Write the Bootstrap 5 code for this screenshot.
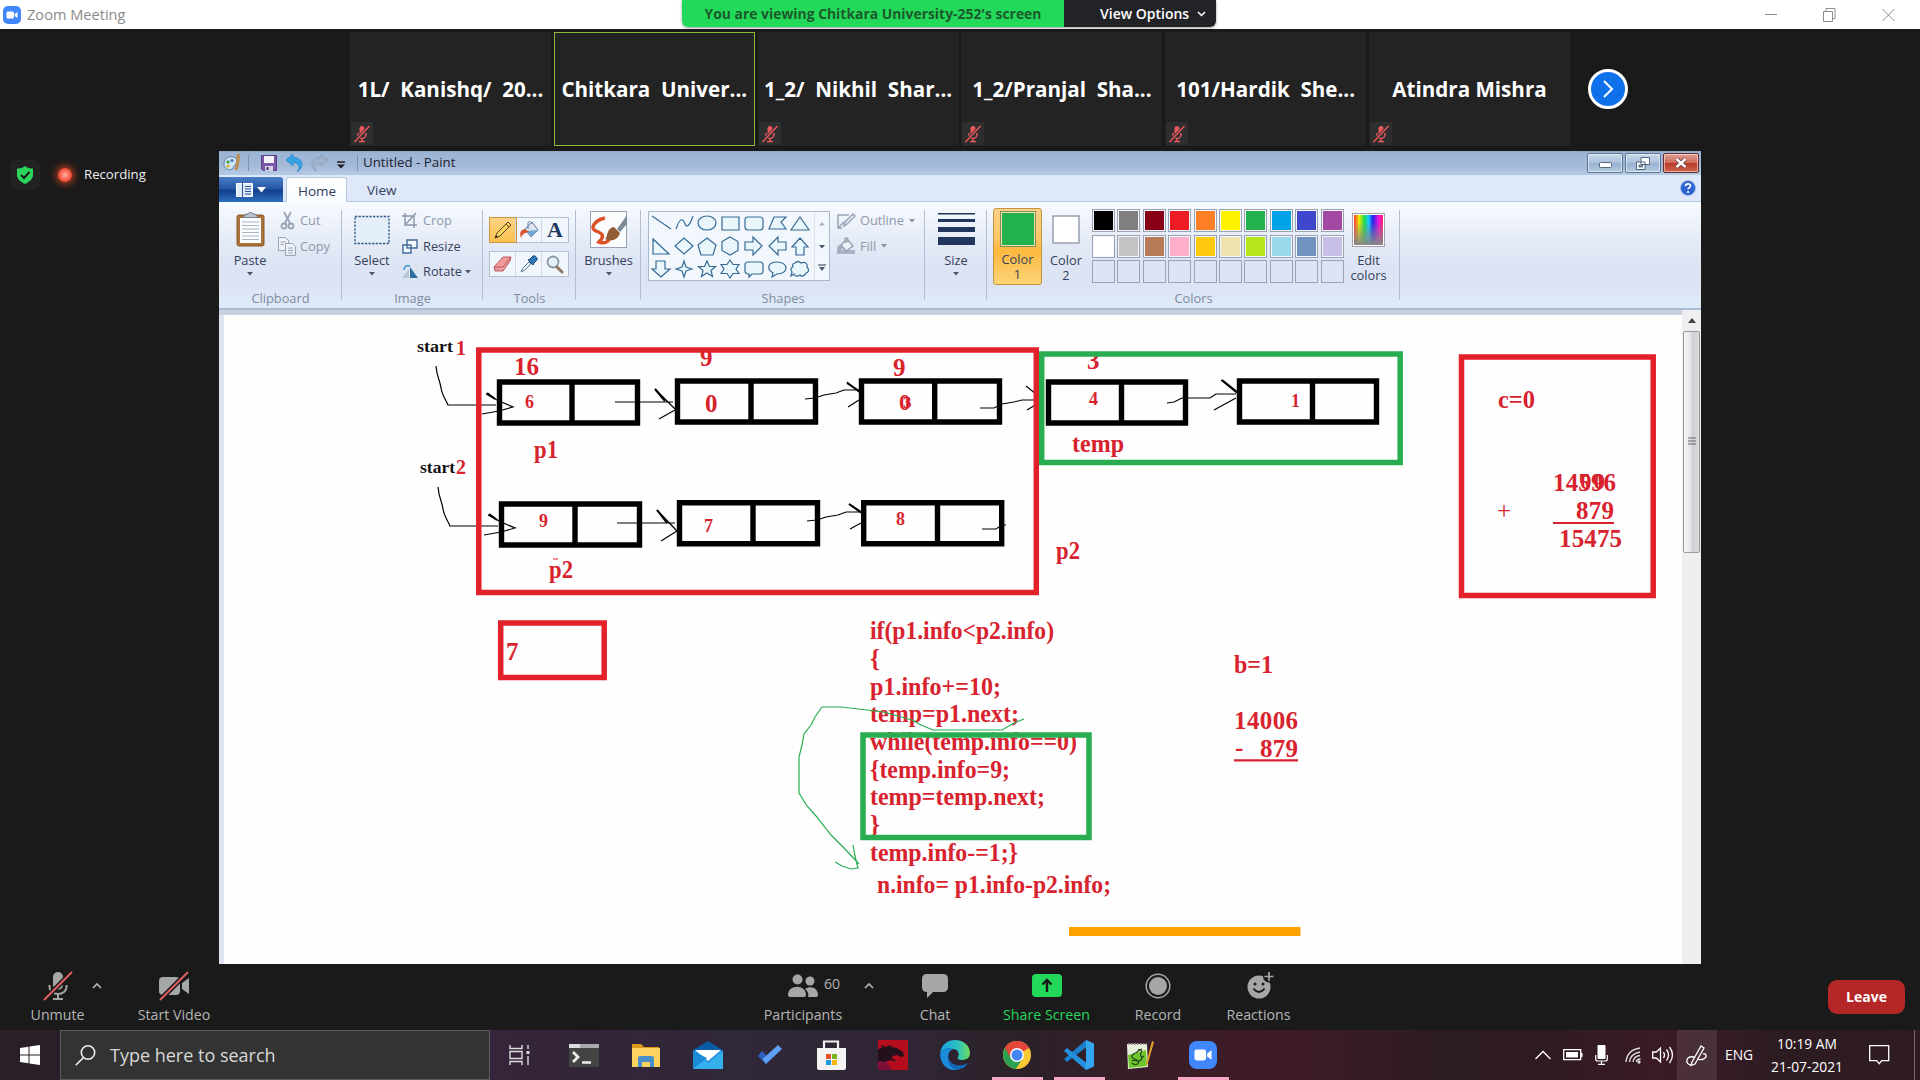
<!DOCTYPE html>
<html lang="en">
<head>
<meta charset="utf-8">
<title>Zoom Meeting</title>
<link rel="stylesheet" href="https://cdn.jsdelivr.net/npm/bootstrap@5.3.0/dist/css/bootstrap.min.css">
<style>
body{width:1920px;height:1080px;overflow:hidden;background:#1a1a1a;font-family:"Open Sans","Noto Sans",sans-serif;font-size:14px;line-height:1}
svg{display:block;flex:none;overflow:visible}
span,div{white-space:nowrap}
.win-title{height:29px;background:#fff;color:#8a8a8a;padding-left:3px}
.win-title .cap{font-size:14.6px;margin-left:6px}
.banner{left:682px;top:0;height:27px;width:534px;border-radius:0 0 6px 6px;overflow:hidden;z-index:3;box-shadow:0 1px 3px #0006;font-weight:700;font-size:13.9px}
.banner .who{width:382px;background:#23d959;color:#1b5a2c}
.banner .opt{background:#222327;color:#fff;font-weight:600;font-size:14px}
.film{height:122px;padding:3px 0 5px 350px;gap:2.800px}
.tile{width:201px;height:114px;background:#232323;color:#fff;font-weight:700;font-size:20.600px;border:1px solid #232323}
.tile.on{border-color:#8db83c}
.tile .mic{left:0;bottom:0;width:22px;height:23px;background:#2e2e2e}
.nextb{width:40px;height:40px;border:3.5px solid #fff;background:#0e71eb;margin-left:15px}
.side{width:219px;padding:9px 0 0 10px;color:#eee;font-size:13.200px}
.shieldbox{width:30px;height:30px;border-radius:6px;background:#222}
.rec{width:14px;height:14px;background:radial-gradient(#ffb0a0,#f4503c 60%);box-shadow:0 0 7px 2px #b8401c;margin:0 12px 0 18px}
.paint{width:1482px;height:813px;background:#dfe3f2;color:#333f5c}
.p-title{height:24px;background:linear-gradient(#8fa6c4 0,#9db6d6 8%,#a3b9d6 60%,#b5cce8);color:#1d2433;font-size:13.300px}
.vsep{width:1px;height:16px;background:#7d93b2}
.wb{width:36px;height:20px;border:1px solid #5f7691;border-radius:2px;background:linear-gradient(#c8d8ea,#adc3dc 48%,#98b2d0 52%,#b4cce4);box-shadow:inset 0 0 0 1px #ffffff80}
.wb.red{background:linear-gradient(#dca195,#cf6a59 48%,#b93a29 52%,#d0664f);border-color:#6b2a2c}
.p-tabs{height:27px;padding-top:2px;background:#dee8f8;font-size:13.5px;border-bottom:1px solid #b7c9de}
.filebtn{width:64px;height:25px;background:linear-gradient(#4a7cc6,#2557a5 48%,#123f8b 52%,#2e6fc0);border-radius:0 3px 0 0}
.tab-on{width:61px;margin-left:3px;height:25px;background:linear-gradient(#fff,#f8fbff);border:1px solid #b7c9de;border-bottom:0;border-radius:3px 3px 0 0;padding:3px 0 0 1px}
.ribbon{height:108px;background:linear-gradient(#f8fbff,#ecf1fa 22%,#dde4f3 55%,#dce3f2 78%,#dfebf9);border-bottom:2px solid #a9bcd4;font-size:12.800px}
.grp{height:98px;position:relative}
.grp::after{content:"";position:absolute;right:0;top:8px;height:90px;width:1px;background:#b3bfd0}
.grp .body{height:88px}
.gcap{height:17px;line-height:17px;color:#7f8ba3;text-align:center}
.rb{padding-top:6px;text-align:center}
.rb .ic{height:43.500px}
.rb .l{line-height:16px}
.rb svg.ar{margin-top:4px}
.dim{color:#8e98aa}
.line3{height:25.5px}
.tools{width:80px;height:26px;border:1px solid #b4bfd0;background:#f1f5fc}
.tools>span{width:27px;border-right:1px solid #d3dae6}
.tools>span:last-child{border-right:0}
.tools>span.hot{background:linear-gradient(#fcd385,#fbc04f);outline:1px solid #c8973d}
.gal{width:182px;height:70px;border:1px solid #aab8cb;background:#f2f7fd}
.c1{width:49px;height:77px;background:linear-gradient(#fbd188,#fbc665 40%,#fdb83f 55%,#fdd477);border:1px solid #c29540;border-radius:3px}
.sw{width:36px;height:36px;border:1px solid #7d8f5e;box-shadow:inset 0 0 0 1px #f7e0a0;background:#22b14c}
.pal{display:grid;grid-template-columns:repeat(10,23px);gap:2.5px 2.4px;grid-auto-rows:23px}
.pal i{border:1px solid #9aa3b3;box-shadow:inset 0 0 0 1px #f4f6fa}
.pal i.no{box-shadow:none}
.p-gap{height:5px;background:#c9d0e0}
.sbar{width:19px;background:#efeff1}
.thumb{margin:0 1px;height:222px;border:1px solid #9a9a9e;border-radius:2px;background:linear-gradient(90deg,#f6f6f6,#e4e4e7 45%,#cfcfd3 55%,#dcdce0)}
.zbar{height:66px;color:#b5b5b5;font-size:14.200px}
.zi{padding-top:5px;text-align:center}
.zi .ic{height:34px;margin-bottom:5px}
.leave{width:77px;height:34px;border-radius:9px;background:#b52627;color:#fff;font-weight:700;font-size:14px;margin:16px 15px 0 0}
.task{height:50px;background:linear-gradient(90deg,#2a1f29 0,#2a1f29 3%,#35243a 26%,#302738 38%,#2f2534 48%,#2b2128 53%,#391d28 60%,#3f1b26 67%,#2c1c20 75%,#2e1b22 80%,#3b1a27 87%,#2c1c22 93%,#301b22);color:#fff}
.find{width:430px;height:50px;background:#333;border:1px solid #5c5c5c;color:#d8d8d8;font-size:18px}
.app{width:61.9px;height:50px;border-bottom:3px solid transparent;padding-top:3px}
.app.run::after{content:"";position:absolute;left:6px;right:5px;bottom:-3px;height:3px;background:#f4a6c6}
.serif{font-family:"Liberation Serif",serif;font-weight:700;fill:#d8232f}
</style>
<script src="https://cdn.jsdelivr.net/npm/bootstrap@5.3.0/dist/js/bootstrap.bundle.min.js"></script>
</head>
<body class="d-flex flex-column position-relative">
<svg width="0" height="0" class="position-absolute">
<defs>
<symbol id="zm" viewBox="0 0 18 18"><rect width="18" height="18" rx="5" fill="#4087fc"/><rect x="3.5" y="5.5" width="7.5" height="7" rx="1.5" fill="#fff"/><path d="M11.7 8 14.5 6v6l-2.800-2z" fill="#fff"/></symbol>
<symbol id="mo" viewBox="0 0 16 18"><rect x="5.500" y="1" width="5" height="9" rx="2.500" fill="#e8585c"/><path d="M4 8v1.500a4 4 0 0 0 8 0V8M8 13.500V16M5 16.500h6" stroke="#e8585c" stroke-width="1.500" fill="none"/><path d="M.5 17 15.500 1" stroke="#2e2e2e" stroke-width="3"/><path d="M.5 17 15.500 1" stroke="#e8585c" stroke-width="1.500"/></symbol>
<symbol id="dn" viewBox="0 0 6 4"><path d="M0 0h6L3 3.500z" fill="#4b566d"/></symbol>
<symbol id="up" viewBox="0 0 10 7"><path d="M1 6l4-4 4 4" fill="none" stroke="#b5b5b5" stroke-width="1.700"/></symbol>
</defs>
</svg>

<header class="win-title d-flex align-items-center">
<svg width="18" height="18"><use href="#zm"/></svg>
<span class="cap">Zoom Meeting</span>
<svg class="ms-auto" width="13" height="14" stroke="#8c8c8c"><path d="M0 6.500h12"/></svg>
<svg width="13" height="14" stroke="#8c8c8c" fill="none" style="margin:0 46px 0 45px"><path d="M.5 3.500h9v10h-9zM3 3.500V.5h9v10H9.500"/></svg>
<svg width="13" height="14" stroke="#8c8c8c" style="margin-right:25px"><path d="M.5 1l12 12M12.500 1l-12 12"/></svg>
</header>
<div class="banner position-absolute d-flex">
<div class="who d-flex align-items-center justify-content-center">You are viewing Chitkara University-252's screen</div>
<div class="opt d-flex align-items-center flex-fill ps-4"><span class="ps-2 ms-1">View Options</span><svg width="9" height="6" class="ms-2"><path d="M1 1l3.500 3.500L8 1" fill="none" stroke="#fff" stroke-width="1.500"/></svg></div>
</div>

<section class="film d-flex">
<div class="tile position-relative d-flex align-items-center justify-content-center"><span>1L/&nbsp; Kanishq/&nbsp; 20...</span><span class="mic position-absolute d-flex align-items-center justify-content-center"><svg width="16" height="18"><use href="#mo"/></svg></span></div>
<div class="tile on d-flex align-items-center justify-content-center"><span>Chitkara&nbsp; Univer...</span></div>
<div class="tile position-relative d-flex align-items-center justify-content-center"><span>1_2/&nbsp; Nikhil&nbsp; Shar...</span><span class="mic position-absolute d-flex align-items-center justify-content-center"><svg width="16" height="18"><use href="#mo"/></svg></span></div>
<div class="tile position-relative d-flex align-items-center justify-content-center"><span>1_2/Pranjal&nbsp; Sha...</span><span class="mic position-absolute d-flex align-items-center justify-content-center"><svg width="16" height="18"><use href="#mo"/></svg></span></div>
<div class="tile position-relative d-flex align-items-center justify-content-center"><span>101/Hardik&nbsp; She...</span><span class="mic position-absolute d-flex align-items-center justify-content-center"><svg width="16" height="18"><use href="#mo"/></svg></span></div>
<div class="tile position-relative d-flex align-items-center justify-content-center"><span>Atindra Mishra</span><span class="mic position-absolute d-flex align-items-center justify-content-center"><svg width="16" height="18"><use href="#mo"/></svg></span></div>
<div class="nextb rounded-circle align-self-center d-flex align-items-center justify-content-center"><svg width="10" height="18"><path d="M1 1l8 8-8 8" fill="none" stroke="#fff" stroke-width="2"/></svg></div>
</section>

<main class="d-flex">
<aside class="side"><div class="d-flex align-items-center">
<div class="shieldbox d-flex align-items-center justify-content-center"><svg width="16" height="18"><path d="M8 0c2 2 5 2.500 8 2.500V9c0 4-3.500 7-8 9-4.500-2-8-5-8-9V2.500C3 2.500 6 2 8 0z" fill="#2bd45c"/><path d="M4 9l3 3 5.500-6" stroke="#1a1a1a" stroke-width="2" fill="none"/></svg></div>
<div class="rec rounded-circle"></div><span>Recording</span></div></aside>

<section class="paint d-flex flex-column">
<div class="p-title d-flex align-items-center ps-1">
<svg width="19" height="18"><path d="M1 10C1 5 5 2 10 3c5 1 4 6 2 8-2 1-1 3-3 4-4 2-8-1-8-5z" fill="#d3e6f3" stroke="#5f83a8"/><circle cx="5" cy="8" r="1.700" fill="#48a04c"/><circle cx="9" cy="6.500" r="1.600" fill="#3d76c9"/><circle cx="5" cy="12" r="1.600" fill="#e0aa30"/><path d="M15 0c1 5 0 9-2 16" stroke="#c08a4c" stroke-width="3" fill="none"/></svg>
<div class="vsep" style="margin:0 12px 0 6px"></div>
<svg width="17" height="17"><path d="M.5.500h15v15H2l-1.500-1.500z" fill="#7a58a6" stroke="#5b3f86"/><path d="M3 1h10v7H3z" fill="#f4f1f8"/><path d="M4 11h8v5H4z" fill="#d8d0e4"/><path d="M5.500 12h2v3h-2z" fill="#463064"/></svg>
<svg width="17" height="18" style="margin-left:8px"><path d="M0 6l7-6v3.500c6 0 9 3 9 7 0 3-2 6-5 7 2-2 2.500-4 1.500-6C11.700 9.500 10 8.500 7 8.500V12z" fill="#35a3e4" stroke="#2484c4" stroke-width=".7"/></svg>
<svg width="17" height="18" style="margin-left:8px"><path d="M17 6l-7-6v3.500C4 3.500 1 6.500 1 10.500c0 3 2 6 5 7-2-2-2.500-4-1.500-6C5.300 9.500 7 8.500 10 8.500V12z" fill="#a0b3cb" stroke="#869dba" stroke-width=".8"/></svg>
<svg width="9" height="8" style="margin-left:9px;margin-top:4px"><path d="M0 1h8" stroke="#222" stroke-width="1.500"/><path d="M0 3.500h8L4 7.500z" fill="#222"/></svg>
<div class="vsep" style="margin:0 5px 0 11px"></div>
<span>Untitled - Paint</span>
<div class="d-flex ms-auto" style="gap:2px;margin-right:2px">
<div class="wb d-flex align-items-center justify-content-center"><svg width="13" height="6" style="margin-top:4px"><rect x=".5" y=".5" width="12" height="5" rx="1" fill="#fff" stroke="#55667c"/></svg></div>
<div class="wb d-flex align-items-center justify-content-center"><svg width="14" height="13" fill="#fff" stroke="#55667c"><path d="M5 .5h8.500v7H5zM.5 5H9v7.500H.5z"/><path d="M3 8h3.500v2H3z" fill="#9ab"/></svg></div>
<div class="wb red d-flex align-items-center justify-content-center"><svg width="12" height="10"><path d="M1.500 1l9 8M10.500 1l-9 8" stroke="#5e3038" stroke-width="4"/><path d="M1.500 1l9 8M10.500 1l-9 8" stroke="#fff" stroke-width="2.600"/></svg></div>
</div></div>
<div class="p-tabs d-flex">
<div class="filebtn d-flex align-items-center justify-content-center"><svg width="17" height="14"><path d="M.5.500h16v13H.5z" fill="#dfeaf8" stroke="#fff"/><path d="M6.500 0v14M9 3.500h6M9 6h6M9 8.500h6M9 11h6" stroke="#27549b"/></svg><svg width="9" height="6" class="ms-1"><path d="M0 0h9L4.500 5.500z" fill="#fff"/></svg></div>
<div class="tab-on d-flex align-items-center justify-content-center">Home</div>
<div class="d-flex align-items-center" style="margin-left:20px;padding-top:3px">View</div>
<svg width="16" height="16" class="ms-auto" style="margin:3px 5px 0 0"><circle cx="8" cy="8" r="7.500" fill="#2f63d0" stroke="#9db9ea"/><path d="M5.500 6.300C5.500 3 10.800 3.200 10.500 6c-.2 1.700-2.400 1.600-2.400 3.300" fill="none" stroke="#fff" stroke-width="1.700"/><circle cx="8.100" cy="12" r="1.100" fill="#fff"/></svg>
</div>

<div class="ribbon d-flex">
<div class="grp" style="width:123px"><div class="body d-flex">
<div class="rb d-flex flex-column align-items-center" style="width:62px"><div class="ic d-flex align-items-center"><svg width="29" height="35"><rect x="1" y="3" width="27" height="31" rx="2" fill="#a9733a" stroke="#87582a"/><path d="M4 6h21v25H4z" fill="#fbfcfd"/><path d="M6 10h17M6 13.500h17M6 17h17M6 20.500h17M6 24h17M6 27.500h17" stroke="#a9b4c2"/><path d="M7 5.500h15L19 2h-2c-.5-2-4.500-2-5 0h-2z" fill="#b9c2cc" stroke="#74808c"/></svg></div><div class="l">Paste</div><svg class="ar" width="6" height="4"><use href="#dn"/></svg></div>
<div class="dim" style="padding:6px 0 0 0">
<div class="line3 d-flex align-items-center"><svg width="14" height="18" fill="none" stroke="#98a4b5" stroke-width="1.800"><path d="M3 0l6 11M10 0L4 11"/><circle cx="3" cy="14" r="2.500"/><circle cx="10" cy="14" r="2.500"/></svg><span style="margin-left:5px">Cut</span></div>
<div class="line3 d-flex align-items-center"><svg width="18" height="19" fill="#eef1f7" stroke="#98a4b5" style="margin-left:-3px"><path d="M.5.500h7l3 3v10H.5z"/><path d="M7.500 6.500h7l3 3v9h-10z"/><path d="M2.500 5h5M2.500 7.500h3M10 11h5M10 13.500h5M10 16h5"/></svg><span style="margin-left:4px">Copy</span></div>
</div></div><div class="gcap">Clipboard</div></div>

<div class="grp" style="width:141px"><div class="body d-flex">
<div class="rb d-flex flex-column align-items-center" style="width:60px"><div class="ic d-flex align-items-center"><svg width="36" height="30"><rect x="1" y="1.500" width="34" height="27" fill="#e3eefa" stroke="#2f5784" stroke-width="1.300" stroke-dasharray="2.300 1.300"/></svg></div><div class="l">Select</div><svg class="ar" width="6" height="4"><use href="#dn"/></svg></div>
<div style="padding-top:6px">
<div class="line3 dim d-flex align-items-center"><svg width="16" height="15" fill="none" stroke="#8997aa" stroke-width="1.400"><path d="M3 0v12h12M0 3h12v12M3 12L14 0"/></svg><span style="margin-left:5px">Crop</span></div>
<div class="line3 d-flex align-items-center"><svg width="16" height="15" stroke="#3f6b9b" fill="#f4f9ff" stroke-width="1.400"><path d="M1 6h8v8H1zM5 1h10v8H5z"/></svg><span style="margin-left:5px">Resize</span></div>
<div class="line3 d-flex align-items-center"><svg width="16" height="15"><path d="M8 14V3l8 11z" fill="#2c6f9f"/><path d="M7 14V5L0 14z" fill="#b8c5d3"/><path d="M2 6c0-4 3-5 6-4" stroke="#3d9bd3" stroke-width="1.600" fill="none"/></svg><span style="margin-left:5px">Rotate</span><svg width="6" height="4" style="margin-left:3px"><use href="#dn"/></svg></div>
</div></div><div class="gcap">Image</div></div>

<div class="grp" style="width:93px"><div class="body d-flex flex-column" style="padding:15px 0 0 6px;gap:8px">
<div class="tools d-flex"><span class="hot d-flex align-items-center justify-content-center"><svg width="18" height="18"><path d="M1 17l2-5L14 1l3 3L6 15z" fill="#f6cf57" stroke="#5c4820"/><path d="M1 17l1-3 2 2z" fill="#222"/><path d="M12 3l3 3" stroke="#5c4820"/></svg></span><span class="d-flex align-items-center justify-content-center"><svg width="20" height="18"><path d="M6 8l7-7 6 8-7 7z" fill="#dde6ee" stroke="#5e7f9c"/><path d="M9 8V2c0-2 4-2 4 1" fill="none" stroke="#5e7f9c"/><path d="M12 16l7-7-11 1z" fill="#6fa5cf"/><path d="M6 8C0 9 1 14 2 17c2-5 4-5 8-6z" fill="#d9532c"/></svg></span><span class="d-flex align-items-center justify-content-center" style="font:700 22px 'Liberation Serif',serif;color:#1f3a60">A</span></div>
<div class="tools d-flex"><span class="d-flex align-items-center justify-content-center"><svg width="20" height="16"><path d="M1 11L10 1h8l-1 4-7 10H2z" fill="#ef9a9c" stroke="#b9585c"/><path d="M1 11h9l8-10" fill="none" stroke="#b9585c"/></svg></span><span class="d-flex align-items-center justify-content-center"><svg width="18" height="18"><path d="M1 17l2-4 6-6 2 2-6 6z" fill="#e6f2fa" stroke="#5f7b93"/><path d="M8 5l5 5 1-2 3-3c1-2-2-5-4-4l-3 3z" fill="#2c76b8" stroke="#1d4f80"/></svg></span><span class="d-flex align-items-center justify-content-center"><svg width="18" height="19"><circle cx="7" cy="7" r="5.500" fill="#e4f0f8" stroke="#8a97a5" stroke-width="1.800"/><path d="M11 12l5 5" stroke="#8c7a62" stroke-width="3" stroke-linecap="round"/></svg></span></div>
</div><div class="gcap">Tools</div></div>

<div class="grp" style="width:65px"><div class="body rb d-flex flex-column align-items-center"><div class="ic d-flex align-items-center"><svg width="37" height="37"><rect x=".5" y=".5" width="36" height="36" fill="#fbfcfe" stroke="#96a3b5"/><path d="M15 7C3 10 0 18 6 20c5 2 10 4 3 11 8 3 11-3 12-6" fill="none" stroke="#dd5126" stroke-width="3.500"/><path d="M37 4L27 18l3 3 7-8z" fill="#7f8d9b"/><path d="M15 28c3-1 1-11 9-12l6 6c-2 7-9 9-15 6z" fill="#935e35"/></svg></div><div class="l">Brushes</div><svg class="ar" width="6" height="4"><use href="#dn"/></svg></div></div>

<div class="grp" style="width:284px"><div class="body d-flex" style="padding:9px 0 0 7px">
<div class="gal d-flex">
<svg width="165" height="68" viewBox="649 212 165 68" fill="#e9f6fb" stroke="#376b96" stroke-width="1.200">
<path d="M652 216l19 13"/><path d="M676 229c5-15 8-8 9-5s4 4 8-8" fill="none"/><ellipse cx="707" cy="223" rx="9" ry="7"/><path d="M722 217h17v13h-17z"/><rect x="745" y="217" width="18" height="13" rx="3"/><path d="M769 229l5-12h12l-5 5 5 7zM800 217l9 13h-18z"/>
<path d="M653 239v15h16zM684 238l9 8-9 8-9-8zM707 238l9 7-3 10h-12l-3-10zM730 237l8 4.500v9L730 255l-8-4.500v-9zM745 242h8v-5l9 9-9 9v-5h-8zM786 242h-8v-5l-9 9 9 9v-5h8zM796 255v-8h-4l8-9 8 9h-4v8z"/>
<path d="M656 261h9v8h5l-9 8-9-8h4zM684 261l2 6 6 2-6 2-2 6-2-6-6-2 6-2zM707 261l2.500 5.500h6l-4.500 4 1.500 6-5.500-3.500-5.500 3.500 1.500-6-4.500-4h6zM730 260l3 4.500h6l-3 4.500 3 4.500h-6l-3 4.500-3-4.500h-6l3-4.500-3-4.500h6z"/><path d="M748 262h12q3 0 3 3v6q0 3-3 3h-8l-3 3v-3q-4 0-4-3v-6q0-3 3-3zM777 262c12 0 12 12 0 12l-5 3 1-4c-7-4-5-11 4-11zM795 263c3-3 5-1 6 0 4-2 7 1 6 4 3 3 1 6-1 6-1 3-4 4-6 2-3 2-6 1-6-1l-3 2 1-4c-2-3-1-5 1-5-1-2 0-4 2-4z"/></svg>
<div class="d-flex flex-column align-items-center flex-fill border-start" style="padding-top:10px;gap:19px"><svg width="6" height="4"><path d="M0 3.500h6L3 0z" fill="#a8b3c3"/></svg><svg width="6" height="4"><use href="#dn"/></svg><svg width="8" height="8" style="margin-top:-4px"><path d="M0 1h8" stroke="#4b566d" stroke-width="1.200"/><path d="M1 3h6L4 7z" fill="#4b566d"/></svg></div>
</div>
<div class="dim" style="margin:-3px 0 0 7px">
<div class="line3 d-flex align-items-center"><svg width="19" height="16" fill="none" stroke="#98a4b5" stroke-width="1.500"><path d="M12 2H1v13h4M1 15L7 9M7 13l1-4 8-8 2 2-8 8z"/></svg><span style="margin-left:4px">Outline</span><svg width="6" height="4" style="margin-left:5px" opacity=".6"><use href="#dn"/></svg></div>
<div class="line3 d-flex align-items-center"><svg width="19" height="18"><path d="M0 13h18v4H0z" fill="#a9b3c2"/><path d="M4 8l6-6 6 7-7 5z" fill="#eef1f6" stroke="#98a4b5" stroke-width="1.500"/><path d="M4 8c-4 0-3 4-3 6l5-3zM8 6V1h3v4" fill="#a9b3c2" stroke="#98a4b5"/></svg><span style="margin-left:4px">Fill</span><svg width="6" height="4" style="margin-left:5px" opacity=".6"><use href="#dn"/></svg></div>
</div></div><div class="gcap">Shapes</div></div>

<div class="grp" style="width:62px"><div class="body rb d-flex flex-column align-items-center"><div class="ic d-flex align-items-center"><svg width="37" height="33" fill="#20365c"><path d="M0 0h37v1.500H0zM0 6h37v3H0zM0 14h37v5H0zM0 24h37v8H0z"/></svg></div><div class="l">Size</div><svg class="ar" width="6" height="4"><use href="#dn"/></svg></div></div>

<div class="grp" style="width:413px"><div class="body d-flex">
<div class="c1 text-center" style="margin:6px 0 0 6px;padding-top:2px"><div class="sw mx-auto"></div><div style="line-height:15px;margin-top:5px">Color</div><div style="line-height:15px">1</div></div>
<div class="rb" style="width:48px"><div class="ic d-flex align-items-center justify-content-center"><svg width="28" height="30"><rect x="1" y="1" width="26" height="27" fill="#fff" stroke="#8b93a3" stroke-width="1.300"/></svg></div><div class="l">Color</div><div style="line-height:15px">2</div></div>
<div class="pal align-self-start" style="margin:7px 0 0 2px">
<i style="background:#000"></i><i style="background:#7f7f7f"></i><i style="background:#880015"></i><i style="background:#ed1c24"></i><i style="background:#ff7f27"></i><i style="background:#fff200"></i><i style="background:#22b14c"></i><i style="background:#00a2e8"></i><i style="background:#3f48cc"></i><i style="background:#a349a4"></i>
<i style="background:#fff"></i><i style="background:#c3c3c3"></i><i style="background:#b97a57"></i><i style="background:#ffaec9"></i><i style="background:#ffc90e"></i><i style="background:#efe4b0"></i><i style="background:#b5e61d"></i><i style="background:#99d9ea"></i><i style="background:#7092be"></i><i style="background:#c8bfe7"></i>
<i class="no"></i><i class="no"></i><i class="no"></i><i class="no"></i><i class="no"></i><i class="no"></i><i class="no"></i><i class="no"></i><i class="no"></i><i class="no"></i></div>
<div class="rb" style="width:50px"><div class="ic d-flex align-items-center justify-content-center"><svg width="33" height="34"><defs><linearGradient id="hue"><stop offset="0" stop-color="#f33"/><stop offset=".18" stop-color="#ee0"/><stop offset=".35" stop-color="#2d4"/><stop offset=".5" stop-color="#1cf"/><stop offset=".65" stop-color="#22e"/><stop offset=".85" stop-color="#e1d"/><stop offset="1" stop-color="#f26"/></linearGradient><linearGradient id="fade" x2="0" y2="1"><stop offset=".2" stop-color="#888" stop-opacity="0"/><stop offset="1" stop-color="#888"/></linearGradient></defs><rect x=".5" y=".5" width="32" height="33" fill="#fff" stroke="#a8a0a8"/><path d="M2 2h29v30H2z" fill="url(#hue)"/><path d="M2 2h29v30H2z" fill="url(#fade)"/></svg></div><div class="l">Edit</div><div style="line-height:15px">colors</div></div>
</div><div class="gcap">Colors</div></div>
</div>

<div class="d-flex flex-fill">
<div class="d-flex flex-column flex-fill"><div class="p-gap"></div>
<div class="d-flex flex-fill">
<svg width="1458" height="649" viewBox="224 315 1458 649" style="margin-left:5px;background:#fefefe;overflow:hidden">
<g fill="none" stroke="#000" stroke-width="1.200">
<path d="M436 366c1 12 4 14 5 22 1 7 5 12 7 17h48M486 394l13 7 14 6-14 4-17 3"/><path d="M487 393l8 6" stroke-width="2"/>
<path d="M615 402h58M655 389l20 20M659 419l16-9"/><path d="M655 389l10 12" stroke-width="2"/>
<path d="M805 399l10-1 9-3 12-2 8-3h15M847 382l12 10" /><path d="M847 383l12 8" stroke-width="2"/><path d="M848 407l11-7"/>
<path d="M980 408h14l8-4 12-2 8-2h20M1026 386l10 8M1027 410l10-6"/>
<path d="M1167 403l7-1 8-4h28l6-4h20M1221 380l16 13M1214 410l22-12"/><path d="M1222 380l15 12" stroke-width="2"/>
<path d="M438 487c1 12 4 14 5 22 1 7 5 12 7 17h48M488 515l13 7 14 6-14 4-17 3"/><path d="M489 514l8 6" stroke-width="2"/>
<path d="M617 523h58M657 510l20 21M661 541l16-10"/><path d="M657 510l10 13" stroke-width="2"/>
<path d="M807 521l10-1 9-3 12-2 8-3h15M849 504l12 9M850 529l11-6"/><path d="M849 504l12 8" stroke-width="2"/>
<path d="M982 529h14l6-4h4"/>
</g>
<g fill="none" stroke="#000" stroke-width="5.400">
<path d="M499.500 382h138v41H499.500zM572 382v40M677.500 381h138v41h-138zM751 381v40M861.500 381h138v41h-138zM934.700 381v40M1048.500 382h137v41h-137zM1121.500 382v40M1239.500 381h137v41h-137zM1312.500 381v40"/>
<path d="M501.500 504h138v41h-138zM575 504v40M679.500 502.700h138v41h-138zM753 503v40M863.700 502.700h138v41h-138zM937.500 503v40"/></g>
<g class="serif" font-size="25">
<g font-size="17.500" style="fill:#111"><text x="417" y="352" textLength="36" lengthAdjust="spacingAndGlyphs">start</text><text x="420" y="473" textLength="35" lengthAdjust="spacingAndGlyphs">start</text></g>
<text x="456" y="355" font-size="20">1</text><text x="456" y="474" font-size="20">2</text>
<text x="514" y="375">16</text><text x="700" y="366">9</text><text x="893" y="376">9</text><text x="1087" y="369">3</text>
<g font-size="18"><text x="525" y="408">6</text><text x="1089" y="405">4</text><text x="1291" y="407">1</text><text x="539" y="527">9</text><text x="704" y="532">7</text><text x="896" y="525">8</text><text x="903" y="408" font-size="17">3</text></g>
<text x="705" y="412">0</text><text x="899" y="410" font-size="23">0</text>
<text x="534" y="458" textLength="24" lengthAdjust="spacingAndGlyphs">p1</text><text x="1072" y="452" textLength="52" lengthAdjust="spacingAndGlyphs">temp</text><text x="549" y="578" textLength="24" lengthAdjust="spacingAndGlyphs">p2</text><path d="M553 559h5" stroke="#d8232f"/><text x="1056" y="559" textLength="24" lengthAdjust="spacingAndGlyphs">p2</text>
<text x="506" y="660">7</text><text x="1498" y="408" textLength="37" lengthAdjust="spacingAndGlyphs">c=0</text>
<text x="1553" y="491" textLength="63">14596</text><text x="1580" y="489" font-size="23" textLength="25">00</text><text x="1497" y="519" style="font-weight:400">+</text><text x="1576" y="519" textLength="38">879</text><text x="1559" y="547" textLength="63">15475</text>
<g lengthAdjust="spacingAndGlyphs"><text x="870" y="639" textLength="184" lengthAdjust="spacingAndGlyphs">if(p1.info&lt;p2.info)</text><text x="870" y="667">{</text><text x="870" y="694.500" textLength="131" lengthAdjust="spacingAndGlyphs">p1.info+=10;</text><text x="870" y="722" textLength="149" lengthAdjust="spacingAndGlyphs">temp=p1.next;</text><text x="870" y="750" textLength="207" lengthAdjust="spacingAndGlyphs">while(temp.info==0)</text><text x="870" y="777.500" textLength="140" lengthAdjust="spacingAndGlyphs">{temp.info=9;</text><text x="870" y="805" textLength="175" lengthAdjust="spacingAndGlyphs">temp=temp.next;</text><text x="870" y="833">}</text><text x="870" y="860.500" textLength="148" lengthAdjust="spacingAndGlyphs">temp.info-=1;}</text><text x="877" y="893" textLength="234" lengthAdjust="spacingAndGlyphs">n.info= p1.info-p2.info;</text></g>
<text x="1234" y="673" textLength="39" lengthAdjust="spacingAndGlyphs">b=1</text><text x="1234" y="729" textLength="64">14006</text><text x="1235" y="756">-</text><text x="1260" y="757" textLength="38">879</text></g>
<path d="M1553 523h61M1234 760.300h64" stroke="#d8232f" stroke-width="2.200"/>
<g fill="none" stroke="#e3212b" stroke-width="5.500"><path d="M478.800 350h557.500v242.500H478.800zM500.700 623h103.500v54.500H500.700zM1461.500 357h191.700v238.500h-191.700z"/></g>
<g fill="none" stroke="#28ad51" stroke-width="5.500"><path d="M1041.700 354h358.500v108.500h-358.500zM863 735h226v102.500H863z"/>
<path stroke-width="1.200" d="M1024 719l-10 4-12 7h-69l-12-5-9-5-14-4-15-4-16-2-26-3h-19l-7 10-4 8-7 9-2 11-3 12v36l8 13 9 10 15 19 13 13 15 16M853 845l2 11 3 12-7 1-9-3-7-4"/></g>
<path d="M1069 927h231.500v9H1069z" fill="#ffa200"/>
</svg></div></div>
<div class="sbar"><svg width="19" height="21"><path d="M6 13h8l-4-5z" fill="#444"/></svg><div class="thumb d-flex align-items-center justify-content-center"><svg width="8" height="10" stroke="#63636a" stroke-width="1.200"><path d="M0 1h8M0 4h8M0 7h8"/></svg></div></div>
</div>
</section>
</main>

<nav class="zbar d-flex">
<div class="zi d-flex flex-column align-items-center" style="width:115px"><div class="ic d-flex align-items-center"><svg width="30" height="30"><rect x="10" y="1" width="10" height="18" rx="5" fill="#a6a6a6"/><path d="M6.500 14v2a8.500 7 0 0 0 17 0v-2M15 23v4M10 28h10" fill="none" stroke="#a6a6a6" stroke-width="2"/><path d="M1 29L29 1" stroke="#1a1a1a" stroke-width="5"/><path d="M1 29L29 1" stroke="#e0605c" stroke-width="2"/></svg></div><div>Unmute</div></div>
<div style="margin:18px 0 0 -23px"><svg width="10" height="7"><use href="#up"/></svg></div>
<div class="zi d-flex flex-column align-items-center" style="width:144px"><div class="ic d-flex align-items-center"><svg width="30" height="30"><rect x="0" y="6" width="21" height="18" rx="4" fill="#a6a6a6"/><path d="M23 12l7-5v16l-7-5z" fill="#a6a6a6"/><path d="M1 29L29 1" stroke="#1a1a1a" stroke-width="5"/><path d="M1 29L29 1" stroke="#e0605c" stroke-width="2"/></svg></div><div>Start Video</div></div>
<div class="zi d-flex flex-column align-items-center position-relative" style="width:120px;margin-left:497px"><div class="ic d-flex align-items-center"><svg width="30" height="24" fill="#a6a6a6"><circle cx="9.500" cy="5.500" r="5"/><circle cx="22" cy="7" r="4.500"/><path d="M0 21c0-11 18-11 18 0 0 1-1 2-2 2H2c-1 0-2-1-2-2zM20 23c1-3 0-6-3-8 6-4 13-1 13 6 0 1-1 2-2 2z"/></svg></div><div>Participants</div><span class="position-absolute" style="left:81px;top:13px">60</span></div>
<div style="margin:18px 0 0 1px"><svg width="10" height="7"><use href="#up"/></svg></div>
<div class="zi d-flex flex-column align-items-center" style="width:122px"><div class="ic d-flex align-items-center"><svg width="26" height="24" fill="#a6a6a6"><path d="M5 0h16q5 0 5 5v8q0 5-5 5H11l-6 6v-6q-5 0-5-5V5q0-5 5-5z"/></svg></div><div>Chat</div></div>
<div class="zi d-flex flex-column align-items-center" style="width:101px;color:#23d959"><div class="ic d-flex align-items-center"><svg width="30" height="24"><rect y="0" width="30" height="23" rx="4" fill="#23d959"/><path d="M15 18V6M10.500 10.500L15 6l4.500 4.500" fill="none" stroke="#1a1a1a" stroke-width="2.400"/></svg></div><div>Share Screen</div></div>
<div class="zi d-flex flex-column align-items-center" style="width:122px"><div class="ic d-flex align-items-center"><svg width="26" height="26"><circle cx="13" cy="13" r="11.800" fill="none" stroke="#a6a6a6" stroke-width="1.500"/><circle cx="13" cy="13" r="9" fill="#a6a6a6"/></svg></div><div>Record</div></div>
<div class="zi d-flex flex-column align-items-center" style="width:79px"><div class="ic d-flex align-items-center"><svg width="24" height="28"><circle cx="12" cy="15" r="11.500" fill="#a6a6a6"/><circle cx="22" cy="4.500" r="6" fill="#1a1a1a"/><path d="M22 0v9M17.500 4.500h9" stroke="#a6a6a6" stroke-width="1.700"/><circle cx="8" cy="12" r="1.500" fill="#1a1a1a"/><circle cx="16" cy="12" r="1.500" fill="#1a1a1a"/><path d="M6.500 16.500q5.500 7 11 0" stroke="#1a1a1a" stroke-width="1.800" fill="none"/></svg></div><div>Reactions</div></div>
<div class="leave ms-auto d-flex align-items-center justify-content-center">Leave</div>
</nav>

<footer class="task d-flex">
<div class="d-flex align-items-center justify-content-center" style="width:60px"><svg width="20" height="20" fill="#fff"><path d="M0 3l8.500-1.300v7.800H0zM9.500 1.500L20 0v9.500H9.500zM0 10.500h8.500v7.800L0 17zM9.500 10.500H20V20L9.500 18.500z"/></svg></div>
<div class="find d-flex align-items-center"><svg width="21" height="21" style="margin:0 14px" fill="none" stroke="#eee" stroke-width="1.600"><circle cx="13" cy="7.500" r="6.700"/><path d="M8.500 12.500L.7 20.300"/></svg><span>Type here to search</span></div>
<div class="app d-flex align-items-center justify-content-center" style="width:60px"><svg width="22" height="20" fill="none" stroke="#ddd" stroke-width="1.400"><path d="M1 0v3.500h12V0M1 20v-3.500h12V20M1 6.500h12v7H1zM19 0v4M19 11v9"/><path d="M17.500 6h3v3h-3z" fill="#ddd" stroke="none"/></svg></div>
<div class="app d-flex align-items-center justify-content-center" style="margin-left:3px"><svg width="30" height="23"><rect width="30" height="23" rx="1.500" fill="#444"/><path d="M0 0h30v4H0z" fill="#aaa"/><path d="M0 0h11v4H0z" fill="#ddd"/><path d="M4 8l5 5-5 5" fill="none" stroke="#eee" stroke-width="2.800"/><path d="M13 18.500h9" stroke="#eee" stroke-width="2.500"/></svg></div>
<div class="app d-flex align-items-center justify-content-center"><svg width="28" height="24"><path d="M0 1h9l3 3h15v7H0z" fill="#d99a1b"/><path d="M0 5h28v19H0z" fill="#fbd35e"/><path d="M6 24v-9q0-2 2-2h12q2 0 2 2v9h-4v-5h-8v5z" fill="#4990c9"/></svg></div>
<div class="app d-flex align-items-center justify-content-center"><svg width="30" height="28"><path d="M0 9L15 0l15 9v5H0z" fill="#0a5aa6"/><path d="M0 10h30v18H0z" fill="#2492df"/><path d="M2 9h26L15 20z" fill="#fff"/><path d="M0 10l15 12L30 10v18H0z" fill="#35b0ec"/><path d="M0 28l14-11L0 10z" fill="#1b8bd8"/></svg></div>
<div class="app d-flex align-items-center justify-content-center"><svg width="24" height="20"><path d="M0 11l4-5 8 8-4 5z" fill="#2962c0"/><path d="M8 19L4.500 14 20 0l4 4z" fill="#5ea0f5"/></svg></div>
<div class="app d-flex align-items-center justify-content-center"><svg width="29" height="30"><path d="M7 8V1.500h14V8" fill="none" stroke="#eee" stroke-width="2.200"/><path d="M0 8h29v20q0 2-2 2H2q-2 0-2-2z" fill="#f3f3f3"/><path d="M9 14h5v5H9z" fill="#e5502b"/><path d="M15 14h5v5h-5z" fill="#79b51c"/><path d="M9 20h5v5H9z" fill="#1c9be0"/><path d="M15 20h5v5h-5z" fill="#f7b70a"/></svg></div>
<div class="app d-flex align-items-center justify-content-center"><svg width="30" height="30"><path d="M0 0h30v30H0z" fill="#b50d1d"/><path d="M0 9l4-1-1-3 5 2 4-2 2 2 5 1 6 4 1 4-3 1-4-2-4 1-2 2 3 1 2 3-5-2-4 1-3 2H0z" fill="#240f1c"/><path d="M0 21l9 1 5 8H0z" fill="#7d1038"/></svg></div>
<div class="app d-flex align-items-center justify-content-center"><svg width="30" height="30"><defs><linearGradient id="eg"><stop offset="0" stop-color="#1a9fe0"/><stop offset=".6" stop-color="#2cc3c0"/><stop offset="1" stop-color="#6fdc58"/></linearGradient></defs><path d="M0 14C1 5 7 0 15 0c9 0 15 6 15 13 0 5-4 7-8 7-3 0-5-1-4-3 2-3 0-8-5-8-6 0-10 3-13 5z" fill="url(#eg)"/><path d="M0 14c2-4 8-7 13-5-5 2-6 7-3 12 3 5 11 6 18 2-3 5-8 7-13 7C6 30 0 23 0 14z" fill="#1269b8"/><path d="M13 9c-8 3-7 17 3 21C7 31-1 22 1 13c3-4 8-5 12-4z" fill="#1f8bdc"/></svg></div>
<div class="app run position-relative d-flex align-items-center justify-content-center"><svg width="28" height="28"><circle cx="14" cy="14" r="14" fill="#fbc934"/><path d="M14 14L1.900 7A14 14 0 0 1 26.100 7z" fill="#e2463a"/><path d="M14 14L1.900 7a14 14 0 0 0 11 21L20 17z" fill="#2aa252"/><path d="M14 7h12.100A14 14 0 0 0 2 7l6 10.500z" fill="#e2463a"/><circle cx="14" cy="14" r="7" fill="#fff"/><circle cx="14" cy="14" r="5.500" fill="#4384f3"/></svg></div>
<div class="app run position-relative d-flex align-items-center justify-content-center"><svg width="30" height="30"><path d="M22 0l8 3.500v23L22 30z" fill="#35a7f0"/><path d="M22 7.500L3 22l-3-3L22 0z" fill="#1b7fc9"/><path d="M22 22.500L3 8 0 11l22 19z" fill="#2590dd"/></svg></div>
<div class="app d-flex align-items-center justify-content-center"><svg width="30" height="28"><path d="M1 3h20l1 23-20 2z" fill="#e8f0dc"/><path d="M2 14l18-5 1 16-18 2z" fill="#6fc62c"/><path d="M6 22c3 3 8 1 6-2s-7-1-6-5 5-2 6-5 5-1 3 2 3 4 0 7-6-1-9 1M12 10l4-2M15 17l3-2" fill="none" stroke="#24451a" stroke-width="1.200"/><path d="M2 3h19" stroke="#999" stroke-width="2" stroke-dasharray="1.500 1.500"/><path d="M28 1l-6 21-2 4 .5-5L26 0z" fill="#e5a128"/></svg></div>
<div class="app run position-relative d-flex align-items-center justify-content-center"><svg width="28" height="28"><use href="#zm"/></svg></div>
<div class="d-flex align-items-center ms-auto" style="font-size:13.800px">
<svg width="16" height="10" fill="none" stroke="#fff" stroke-width="1.300"><path d="M.5 9L8 1.500 15.500 9"/></svg>
<svg width="20" height="12" style="margin-left:12px"><path d="M.7.700h17v10H.7z" fill="none" stroke="#fff" stroke-width="1.300"/><path d="M3 3h12v5.500H3zM18 4h1.500v4H18z" fill="#fff"/></svg>
<svg width="13" height="20" style="margin-left:12px"><rect x="2.500" width="8" height="14" rx="1" fill="#fff"/><path d="M.7 10v4q0 2 2 2h7.600q2 0 2-2v-4M6.500 16v3M3 19.300h7" fill="none" stroke="#fff" stroke-width="1.200"/></svg>
<svg width="16" height="17" style="margin-left:17px" fill="none" stroke="#ddd" stroke-width="1.300"><path d="M1 15Q2 3 15 1M4.500 15Q5 7 15 5M8 15q1-6 7-6.500M11.500 15q0-3 4-3"/><circle cx="14" cy="15" r="1" fill="#fff"/></svg>
<svg width="22" height="18" style="margin-left:11px" fill="none" stroke="#fff" stroke-width="1.300"><path d="M.7 6h3.600L8.500 2v14L4.300 12H.7zM11.500 6q2 3 0 6M14.500 3.500q4 5.500 0 11M17.500 1q6 8 0 16"/></svg>
<div class="d-flex align-items-center justify-content-center" style="width:40px;height:50px;margin-left:3px;background:#ffffff18"><svg width="20" height="21" fill="none" stroke="#fff" stroke-width="1.300"><path d="M5 17L14 1l3 2L8 19l-4 1.500zM7 12c-9-2-9 8-3 8M10 14c5 2 10-1 9-4-1-2-3-1-3-1"/></svg></div>
<span style="width:36px;margin-left:8px">ENG</span>
<div class="text-center" style="width:92px;line-height:23px;margin-top:-1px">10:19 AM<br>21-07-2021</div>
<svg width="21" height="20" style="margin:0 24px 0 16px" fill="none" stroke="#fff" stroke-width="1.300"><path d="M.7.700h19v15h-7l-2.500 3-2.500-3h-7z"/></svg>
<div style="width:1px;height:50px;background:#7a6a70;margin-right:5px"></div>
</div>
</footer>
</body>
</html>
